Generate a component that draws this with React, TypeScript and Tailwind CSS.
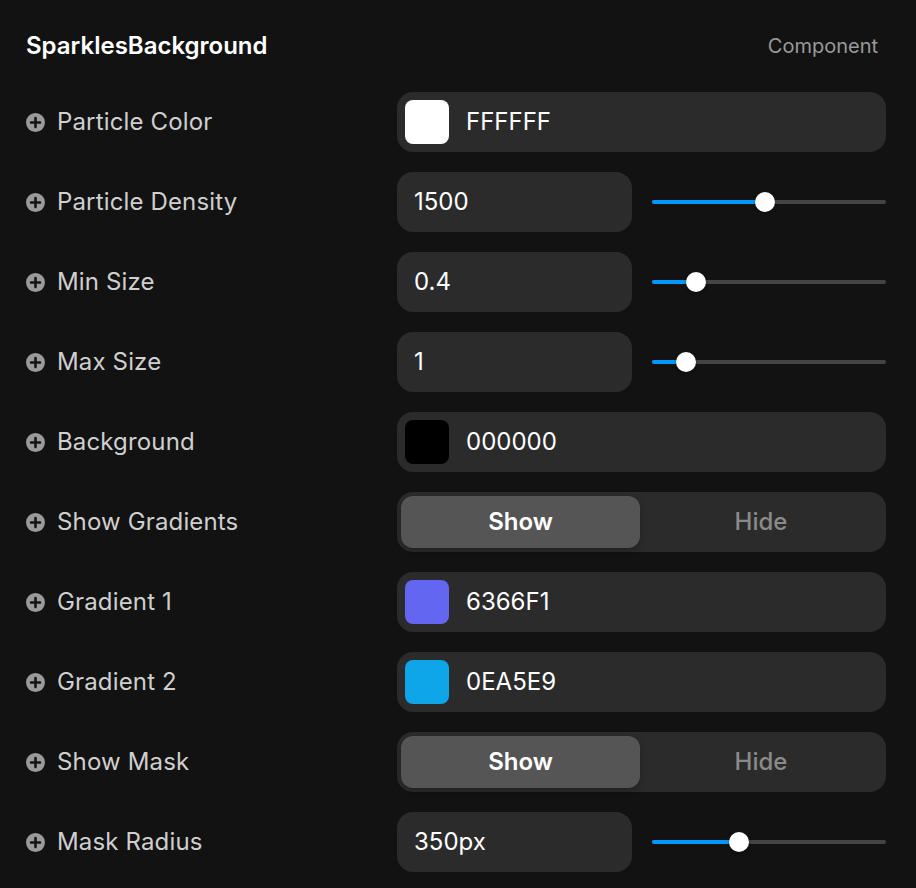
const font = { fontFamily: "Inter, 'Noto Sans', sans-serif" };

const PlusIcon = () => (
  <svg width="19" height="19" viewBox="0 0 19 19" className="shrink-0">
    <circle cx="9.5" cy="9.5" r="9.5" fill="#9a9a9a" />
    <path d="M9.5 5v9M5 9.5h9" stroke="#141414" strokeWidth="2.6" strokeLinecap="round" />
  </svg>
);

const Label = ({ text }: { text: string }) => (
  <div className="flex items-center gap-3 w-[371px] shrink-0">
    <PlusIcon />
    <span className="text-[24px] text-[#cfcfcf] tracking-[0.15px]">{text}</span>
  </div>
);

const ColorField = ({ color, hex }: { color: string; hex: string }) => (
  <div className="flex-1 h-[60px] rounded-2xl bg-[#2b2b2b] flex items-center pl-2 gap-[17px]">
    <div className="w-11 h-11 rounded-lg" style={{ background: color }} />
    <span className="text-[24px] text-white">{hex}</span>
  </div>
);

const NumberField = ({ value, thumb }: { value: string; thumb: number }) => (
  <div className="flex-1 flex items-center gap-5">
    <div className="w-[235px] h-[60px] rounded-2xl bg-[#2b2b2b] flex items-center px-[17px] shrink-0">
      <span className="text-[24px] text-white">{value}</span>
    </div>
    <div className="relative flex-1 h-5">
      <div className="absolute left-0 right-0 top-[8px] h-1 rounded-full bg-[#444444]" />
      <div className="absolute left-0 top-[8px] h-1 rounded-full bg-[#0099ff]" style={{ width: thumb }} />
      <div
        className="absolute top-0 w-5 h-5 rounded-full bg-white shadow-[0_1px_3px_rgba(0,0,0,0.5)]"
        style={{ left: thumb - 10 }}
      />
    </div>
  </div>
);

const Segmented = () => (
  <div className="flex-1 h-[60px] rounded-2xl bg-[#2b2b2b] p-1 flex">
    <div className="w-[239px] rounded-xl bg-[#555555] flex items-center justify-center shadow-[0_2px_6px_rgba(0,0,0,0.25)]">
      <span className="text-[24px] font-semibold text-white">Show</span>
    </div>
    <div className="flex-1 flex items-center justify-center">
      <span className="text-[24px] font-medium text-[#8a8a8a]">Hide</span>
    </div>
  </div>
);

const Row = ({ label, children }: { label: string; children: React.ReactNode }) => (
  <div className="flex items-center h-[60px]">
    <Label text={label} />
    {children}
  </div>
);

export default function App() {
  return (
    <div className="w-[916px] h-[888px] bg-[#121212] pl-[26px] pr-[30px] overflow-hidden" style={font}>
      <div className="flex items-center justify-between h-[92px] pb-[1px]">
        <span className="text-[24px] font-semibold text-white">SparklesBackground</span>
        <span className="text-[20px] text-[#9a9a9a] pr-2">Component</span>
      </div>
      <div className="flex flex-col gap-5">
        <Row label="Particle Color">
          <ColorField color="#ffffff" hex="FFFFFF" />
        </Row>
        <Row label="Particle Density">
          <NumberField value="1500" thumb={113} />
        </Row>
        <Row label="Min Size">
          <NumberField value="0.4" thumb={44} />
        </Row>
        <Row label="Max Size">
          <NumberField value="1" thumb={34} />
        </Row>
        <Row label="Background">
          <ColorField color="#000000" hex="000000" />
        </Row>
        <Row label="Show Gradients">
          <Segmented />
        </Row>
        <Row label="Gradient 1">
          <ColorField color="#6366F1" hex="6366F1" />
        </Row>
        <Row label="Gradient 2">
          <ColorField color="#0EA5E9" hex="0EA5E9" />
        </Row>
        <Row label="Show Mask">
          <Segmented />
        </Row>
        <Row label="Mask Radius">
          <NumberField value="350px" thumb={87} />
        </Row>
      </div>
    </div>
  );
}
